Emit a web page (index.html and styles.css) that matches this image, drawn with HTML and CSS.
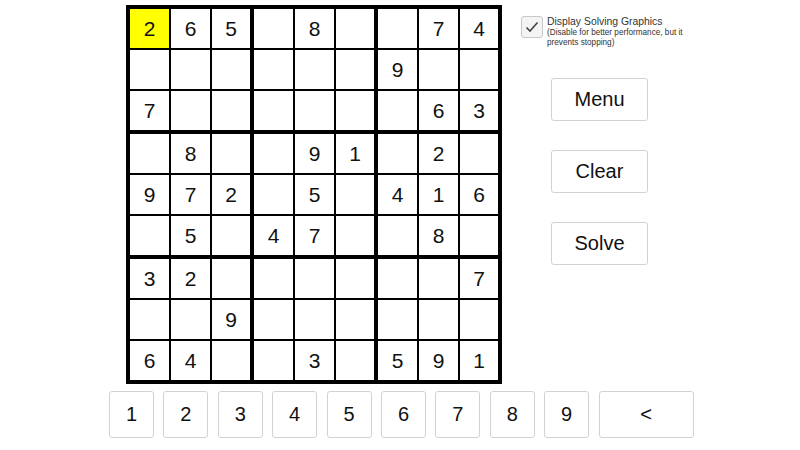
FILE: index.html
```html
<!DOCTYPE html>
<html lang="en">
<head>
    <meta charset="UTF-8">
    <title>Sudoku Solver</title>
    <link rel="stylesheet" href="styles.css">
</head>
<body>
    <div class="top">
        <div class="board">
            <div class="box">
                <div class="cell selected">2</div><div class="cell">6</div><div class="cell">5</div>
                <div class="cell"></div><div class="cell"></div><div class="cell"></div>
                <div class="cell">7</div><div class="cell"></div><div class="cell"></div>
            </div>
            <div class="box">
                <div class="cell"></div><div class="cell">8</div><div class="cell"></div>
                <div class="cell"></div><div class="cell"></div><div class="cell"></div>
                <div class="cell"></div><div class="cell"></div><div class="cell"></div>
            </div>
            <div class="box">
                <div class="cell"></div><div class="cell">7</div><div class="cell">4</div>
                <div class="cell">9</div><div class="cell"></div><div class="cell"></div>
                <div class="cell"></div><div class="cell">6</div><div class="cell">3</div>
            </div>
            <div class="box">
                <div class="cell"></div><div class="cell">8</div><div class="cell"></div>
                <div class="cell">9</div><div class="cell">7</div><div class="cell">2</div>
                <div class="cell"></div><div class="cell">5</div><div class="cell"></div>
            </div>
            <div class="box">
                <div class="cell"></div><div class="cell">9</div><div class="cell">1</div>
                <div class="cell"></div><div class="cell">5</div><div class="cell"></div>
                <div class="cell">4</div><div class="cell">7</div><div class="cell"></div>
            </div>
            <div class="box">
                <div class="cell"></div><div class="cell">2</div><div class="cell"></div>
                <div class="cell">4</div><div class="cell">1</div><div class="cell">6</div>
                <div class="cell"></div><div class="cell">8</div><div class="cell"></div>
            </div>
            <div class="box">
                <div class="cell">3</div><div class="cell">2</div><div class="cell"></div>
                <div class="cell"></div><div class="cell"></div><div class="cell">9</div>
                <div class="cell">6</div><div class="cell">4</div><div class="cell"></div>
            </div>
            <div class="box">
                <div class="cell"></div><div class="cell"></div><div class="cell"></div>
                <div class="cell"></div><div class="cell"></div><div class="cell"></div>
                <div class="cell"></div><div class="cell">3</div><div class="cell"></div>
            </div>
            <div class="box">
                <div class="cell"></div><div class="cell"></div><div class="cell">7</div>
                <div class="cell"></div><div class="cell"></div><div class="cell"></div>
                <div class="cell">5</div><div class="cell">9</div><div class="cell">1</div>
            </div>
        </div>

        <div class="side">
            <div class="option">
                <div class="checkbox">
                    <svg width="14" height="12" viewBox="0 0 14 12">
                        <path d="M1.5 6.5 L5 10 L12.5 1.5" fill="none" stroke="#444" stroke-width="1.6"/>
                    </svg>
                </div>
                <div class="option-text">
                    <div class="option-title">Display Solving Graphics</div>
                    <div class="option-note">(Disable for better performance, but it prevents stopping)</div>
                </div>
            </div>
            <div class="actions">
                <div class="btn action">Menu</div>
                <div class="btn action">Clear</div>
                <div class="btn action">Solve</div>
            </div>
        </div>
    </div>

    <div class="numpad">
        <div class="btn key">1</div>
        <div class="btn key">2</div>
        <div class="btn key">3</div>
        <div class="btn key">4</div>
        <div class="btn key">5</div>
        <div class="btn key">6</div>
        <div class="btn key">7</div>
        <div class="btn key">8</div>
        <div class="btn key">9</div>
        <div class="btn key back">&lt;</div>
    </div>
</body>
</html>
```

FILE: styles.css
```css
body {
    margin: 0;
    background: #fff;
    font-family: 'Liberation Sans', Arial, sans-serif;
    color: #111;
}

.top {
    display: flex;
    align-items: flex-start;
    padding: 5px 0 0 126px;
}

.board {
    display: grid;
    grid-template-columns: repeat(3, auto);
    gap: 4px;
    padding: 4px;
    background: #000;
    width: max-content;
}

.box {
    display: grid;
    grid-template-columns: 39px 39px 38px;
    grid-template-rows: 39px 39px 39px;
    gap: 2px;
}

.cell {
    background: #fff;
    display: flex;
    align-items: center;
    justify-content: center;
    font-size: 21px;
    color: #111;
}

.cell.selected {
    background: #ffff00;
}

.side {
    margin-left: 19px;
}

.option {
    display: flex;
    margin-top: 11px;
}

.checkbox {
    width: 22px;
    height: 22px;
    border: 1px solid #c8c8c8;
    border-radius: 3px;
    background: #f4f4f4;
    box-sizing: border-box;
    display: flex;
    align-items: center;
    justify-content: center;
    flex-shrink: 0;
}

.option-text {
    margin-left: 4px;
    width: 150px;
    color: #333;
}

.option-title {
    font-size: 10.4px;
    line-height: 12px;
}

.option-note {
    font-size: 8.2px;
    line-height: 10px;
}

.actions {
    display: flex;
    flex-direction: column;
    gap: 29px;
    margin: 30px 0 0 30px;
}

.btn {
    background: #fff;
    border: 1px solid #d2d2d2;
    border-radius: 3px;
    display: flex;
    align-items: center;
    justify-content: center;
    color: #111;
    box-sizing: border-box;
}

.action {
    width: 97px;
    height: 43px;
    font-size: 20px;
}

.numpad {
    display: flex;
    gap: 9.4px;
    padding: 7px 0 0 109px;
}

.key {
    width: 45px;
    height: 47px;
    font-size: 20px;
}

.key.back {
    width: 95px;
}
```
